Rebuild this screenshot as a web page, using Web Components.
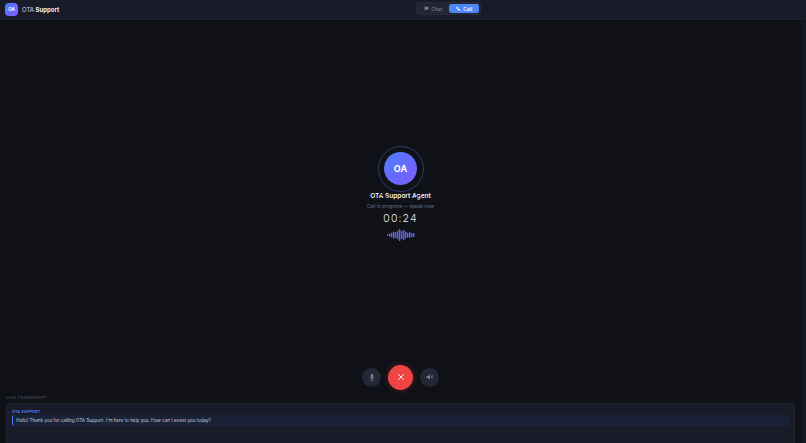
<!DOCTYPE html>
<html>
<head>
<meta charset="utf-8">
<style>
html, body { margin: 0; height: 100%; background: #151823; overflow: hidden; }
body { font-family: Inter, "Liberation Sans", sans-serif; color: #e8eaf2; display: flex; flex-direction: column; }
.view { flex: 1; min-height: 0; margin-right: 5px; background: #0f1117; display: flex; flex-direction: column; }
</style>
</head>
<body>
<app-header></app-header>
<div class="view">
  <call-stage></call-stage>
  <call-controls></call-controls>
  <live-transcript>
    <transcript-message who="OTA SUPPORT">Hello! Thank you for calling OTA Support. I'm here to help you. How can I assist you today?</transcript-message>
  </live-transcript>
</div>
<script>
class AppHeader extends HTMLElement {
    constructor(){
        super();
        this.attachShadow({ mode: "open" });
        this.shadowRoot.innerHTML = `
<style>
:host { display: flex; align-items: center; height: 20px; padding: 0 5px; box-sizing: border-box; background: #191c28; border-bottom: 1px solid #1e2130; flex: none; }
.brand { flex: 0 0 411px; display: flex; align-items: center; gap: 4px; }
.logo { width: 13px; height: 13px; margin-top: -1px; border-radius: 4px; background: linear-gradient(135deg, #4f7cff, #7c5cfc); color: #fff; font-size: 4.5px; font-weight: 700; display: flex; align-items: center; justify-content: center; }
.name { font-size: 6px; font-weight: 400; color: #d6d9e4; margin-top: -1px; }
.name b { font-weight: 700; color: #f0f2f8; }
.tabs { display: flex; gap: 1px; padding: 1px; margin-top: -2px; background: #222533; border-radius: 3px; border: 1px solid #262a39; }
.tab { width: 30px; display: flex; align-items: center; justify-content: center; gap: 2.5px; height: 9px; border-radius: 2.5px; font-size: 5px; font-weight: 500; color: #7b8094; }
.tab.on { background: #4f86f7; color: #fff; }
svg { width: 5px; height: 5px; fill: currentColor; }
</style>
<div class="brand"><div class="logo">OA</div><div class="name">OTA <b>Support</b></div></div>
<div class="tabs">
  <div class="tab"><svg viewBox="0 0 24 24"><path d="M3 3h18v14H8l-5 4z"/></svg>Chat</div>
  <div class="tab on"><svg viewBox="0 0 24 24"><path d="M6.600 2.500l3.300 5-2 2.400c1.200 2.600 3.500 4.900 6.200 6.200l2.400-2 5 3.300-1.500 4c-.3.700-1 1.100-1.800 1C9.500 21.300 2.700 14.500 1.600 6.300c-.1-.8.300-1.500 1-1.800z"/></svg>Call</div>
</div>`;
    }
}

class CallStage extends HTMLElement {
    constructor(){
        super();
        this.attachShadow({ mode: "open" });
        const heights = [2, 3, 5, 7, 6, 9, 12, 8, 10, 7, 5, 6, 4, 4];
        const bars = heights.map((h, i) => `<rect x="${i * 2}" y="${6 - h / 2}" width="1.4" height="${h}" rx=".6"/>`).join("");
        this.shadowRoot.innerHTML = `
<style>
:host { display: flex; flex: 1; flex-direction: column; align-items: center; justify-content: center; min-height: 0; padding-top: 9px; box-sizing: border-box; }
.avatar { position: relative; width: 33px; height: 33px; border-radius: 50%; background: linear-gradient(135deg, #4f7cff, #7c5cfc); color: #fff; font-size: 9px; font-weight: 700; display: flex; align-items: center; justify-content: center; }
.avatar::before, .avatar::after { content: ""; position: absolute; border-radius: 50%; box-sizing: border-box; left: 50%; top: 50%; transform: translate(-50%, -50%); }
.avatar::before { width: 46px; height: 46px; border: 1px solid #2c3a70; }
.avatar::after { width: 66px; height: 66px; border: 1px solid #131724; }
.name { margin-top: 6px; font-size: 6.5px; line-height: 10px; font-weight: 600; color: #f0f2f8; }
.status { margin-top: 1px; font-size: 4.8px; line-height: 8px; color: #6c7186; }
.timer { margin-top: 2px; font-size: 10.5px; line-height: 14px; letter-spacing: 1.1px; font-weight: 300; color: #e8eaf2; }
.wave { margin-top: 3px; display: block; width: 28px; height: 12px; fill: #5f66f2; }
</style>
<div class="avatar">OA</div>
<div class="name">OTA Support Agent</div>
<div class="status">Call in progress — speak now</div>
<div class="timer">00:24</div>
<svg class="wave" viewBox="0 0 28 12">${bars}</svg>`;
    }
}

class CallControls extends HTMLElement {
    constructor(){
        super();
        this.attachShadow({ mode: "open" });
        this.shadowRoot.innerHTML = `
<style>
:host { display: flex; align-items: center; justify-content: center; gap: 7px; padding-bottom: 4.5px; flex: none; }
.btn { width: 19px; height: 19px; border-radius: 50%; background: #232736; color: #7b8094; display: flex; align-items: center; justify-content: center; }
.end { width: 25px; height: 25px; background: #ef4444; color: #fff; box-shadow: 0 0 6px rgba(239,68,68,.3); }
svg { width: 8px; height: 8px; fill: currentColor; }
.end svg { width: 8px; height: 8px; fill: none; stroke: currentColor; stroke-width: 3; stroke-linecap: round; }
</style>
<div class="btn"><svg viewBox="0 0 24 24"><path d="M12 2a3.500 3.500 0 0 0-3.500 3.500v6a3.500 3.500 0 0 0 7 0v-6A3.500 3.500 0 0 0 12 2z"/><path d="M5 11h2a5 5 0 0 0 10 0h2a7 7 0 0 1-6 6.900V21h3v2H8v-2h3v-3.100A7 7 0 0 1 5 11z"/></svg></div>
<div class="btn end"><svg viewBox="0 0 24 24"><path d="M5 5l14 14M19 5L5 19"/></svg></div>
<div class="btn"><svg viewBox="0 0 24 24"><path d="M2 9v6h4l6 5V4L6 9z"/><path d="M15 8a5 5 0 0 1 0 8zM17 4.500a9 9 0 0 1 0 15v-2.300a7 7 0 0 0 0-10.400z"/></svg></div>`;
    }
}

class LiveTranscript extends HTMLElement {
    constructor(){
        super();
        this.attachShadow({ mode: "open" });
        this.shadowRoot.innerHTML = `
<style>
:host { display: block; height: 49px; padding: 0 6px; box-sizing: border-box; flex: none; }
.label { font-size: 3.7px; line-height: 8px; letter-spacing: .55px; font-weight: 700; color: #3f4354; }
.panel { height: 40px; margin-top: 1px; padding: 5px 5px; box-sizing: border-box; background: #191c28; border: 1px solid #1e2130; border-bottom: 0; border-radius: 3px 3px 0 0; }
</style>
<div class="label">LIVE TRANSCRIPT</div>
<div class="panel"><slot></slot></div>`;
    }
}

class TranscriptMessage extends HTMLElement {
    constructor(){
        super();
        this.attachShadow({ mode: "open" });
        this.shadowRoot.innerHTML = `
<style>
:host { display: block; }
.who { font-size: 3.7px; line-height: 5px; font-weight: 700; letter-spacing: .2px; color: #4f7cff; }
.text { margin-top: 1px; height: 11px; padding: 0 3px; display: flex; align-items: center; font-size: 4.55px; color: #c6cad8; background: #1a2238; border-left: 1px solid #4f7cff; border-radius: 2px; }
</style>
<div class="who"></div>
<div class="text"><slot></slot></div>`;
    }

    connectedCallback(){
        this.shadowRoot.querySelector(".who").textContent = this.getAttribute("who");
    }
}

window.customElements.define("app-header", AppHeader);
window.customElements.define("call-stage", CallStage);
window.customElements.define("call-controls", CallControls);
window.customElements.define("live-transcript", LiveTranscript);
window.customElements.define("transcript-message", TranscriptMessage);
</script>
</body>
</html>
